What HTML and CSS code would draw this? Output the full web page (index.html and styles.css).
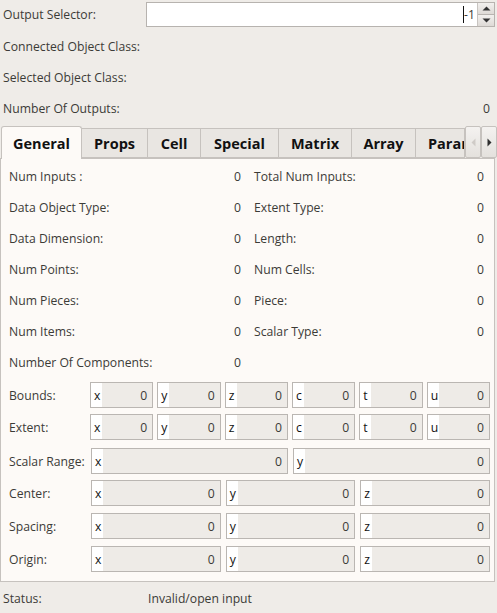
FILE: index.html
```html
<!DOCTYPE html>
<html>
<head>
<meta charset="utf-8">
<link rel="stylesheet" href="styles.css">
</head>
<body>
<div class="top">
  <div class="row first">
    <span class="lbl">Output Selector:</span>
    <div class="spin">
      <div class="spin-field"><span class="caret"></span><span class="num">-1</span></div>
      <div class="spin-btns">
        <div class="sb up"><svg width="9" height="5" viewBox="0 0 9 5"><path d="M0.5 4.5 L4.5 0.5 L8.5 4.5Z" fill="#333"/></svg></div>
        <div class="sb down"><svg width="9" height="5" viewBox="0 0 9 5"><path d="M0.5 0.5 L4.5 4.5 L8.5 0.5Z" fill="#333"/></svg></div>
      </div>
    </div>
  </div>
  <div class="row"><span class="lbl">Connected Object Class:</span></div>
  <div class="row"><span class="lbl">Selected Object Class:</span></div>
  <div class="row"><span class="lbl">Number Of Outputs:</span><span class="num right">0</span></div>
</div>

<div class="tabs">
  <div class="tabbar">
    <div class="tab sel t-general">General</div>
    <div class="tab t-props">Props</div>
    <div class="tab t-cell">Cell</div>
    <div class="tab t-special">Special</div>
    <div class="tab t-matrix">Matrix</div>
    <div class="tab t-array">Array</div>
    <div class="tab clip"><span>Param</span></div>
    <div class="arrow dis"><svg width="5" height="9" viewBox="0 0 5 9"><path d="M4.5 0.5 L0.5 4.5 L4.5 8.5Z" fill="#cfcbc7"/></svg></div>
    <div class="arrow"><svg width="5" height="9" viewBox="0 0 5 9"><path d="M0.5 0.5 L4.5 4.5 L0.5 8.5Z" fill="#2e2e2e"/></svg></div>
  </div>
  <div class="panel">
    <div class="grid">
      <span class="lbl">Num Inputs :</span><span class="num">0</span>
      <span class="lbl">Total Num Inputs:</span><span class="num">0</span>
      <span class="lbl">Data Object Type:</span><span class="num">0</span>
      <span class="lbl">Extent Type:</span><span class="num">0</span>
      <span class="lbl">Data Dimension:</span><span class="num">0</span>
      <span class="lbl">Length:</span><span class="num">0</span>
      <span class="lbl">Num Points:</span><span class="num">0</span>
      <span class="lbl">Num Cells:</span><span class="num">0</span>
      <span class="lbl">Num Pieces:</span><span class="num">0</span>
      <span class="lbl">Piece:</span><span class="num">0</span>
      <span class="lbl">Num Items:</span><span class="num">0</span>
      <span class="lbl">Scalar Type:</span><span class="num">0</span>
      <span class="lbl">Number Of Components:</span><span class="num">0</span>
    </div>
    <div class="vrow r6 first">
      <span class="lbl">Bounds:</span>
      <div class="box"><span class="k">x</span><span class="num">0</span></div>
      <div class="box"><span class="k">y</span><span class="num">0</span></div>
      <div class="box"><span class="k">z</span><span class="num">0</span></div>
      <div class="box"><span class="k">c</span><span class="num">0</span></div>
      <div class="box"><span class="k">t</span><span class="num">0</span></div>
      <div class="box"><span class="k">u</span><span class="num">0</span></div>
    </div>
    <div class="vrow r6">
      <span class="lbl">Extent:</span>
      <div class="box"><span class="k">x</span><span class="num">0</span></div>
      <div class="box"><span class="k">y</span><span class="num">0</span></div>
      <div class="box"><span class="k">z</span><span class="num">0</span></div>
      <div class="box"><span class="k">c</span><span class="num">0</span></div>
      <div class="box"><span class="k">t</span><span class="num">0</span></div>
      <div class="box"><span class="k">u</span><span class="num">0</span></div>
    </div>
    <div class="vrow r2">
      <span class="lbl">Scalar Range:</span>
      <div class="box"><span class="k">x</span><span class="num">0</span></div>
      <div class="box"><span class="k">y</span><span class="num">0</span></div>
    </div>
    <div class="vrow r3 gap6">
      <span class="lbl">Center:</span>
      <div class="box"><span class="k">x</span><span class="num">0</span></div>
      <div class="box"><span class="k">y</span><span class="num">0</span></div>
      <div class="box"><span class="k">z</span><span class="num">0</span></div>
    </div>
    <div class="vrow r3">
      <span class="lbl">Spacing:</span>
      <div class="box"><span class="k">x</span><span class="num">0</span></div>
      <div class="box"><span class="k">y</span><span class="num">0</span></div>
      <div class="box"><span class="k">z</span><span class="num">0</span></div>
    </div>
    <div class="vrow r3">
      <span class="lbl">Origin:</span>
      <div class="box"><span class="k">x</span><span class="num">0</span></div>
      <div class="box"><span class="k">y</span><span class="num">0</span></div>
      <div class="box"><span class="k">z</span><span class="num">0</span></div>
    </div>
  </div>
</div>

<div class="status">
  <span class="lbl">Status:</span>
  <span class="stat">Invalid/open input</span>
</div>
</body>
</html>
```

FILE: styles.css
```css
* { box-sizing: border-box; }
html, body { margin: 0; padding: 0; }
body {
  width: 497px;
  height: 613px;
  background: #efece8;
  font-family: "Open Sans", "Noto Sans", sans-serif;
  font-size: 12.2px;
  color: #3c3b37;
  overflow: hidden;
}
.num { color: #3c3b37; }

.top { padding: 1px 2px 0 3px; }
.row {
  display: flex;
  align-items: center;
  height: 31px;
}
.row.first { height: 26px; margin-bottom: 4px; }
.top .row .lbl { width: 143px; flex: none; }
.row .right { margin-left: auto; margin-right: 5px; }

.spin {
  flex: 1;
  display: flex;
  height: 25px;
  border: 1px solid #b7b3af;
  background: #fff;
}
.spin-field {
  flex: 1;
  display: flex;
  align-items: center;
  justify-content: flex-end;
  padding-right: 2px;
}
.caret { width: 1px; height: 17px; background: #111; }
.spin-btns {
  width: 17px;
  display: flex;
  flex-direction: column;
  border-left: 1px solid #c8c4c0;
}
.sb {
  flex: 1;
  display: flex;
  align-items: center;
  justify-content: center;
  background: linear-gradient(#f2f0ee, #dedad6);
  border-bottom: 1px solid #b8b4b0;
}
.sb.down { border-bottom: none; }

.tabs { margin-top: 2px; }
.tabbar {
  display: flex;
  align-items: flex-end;
  height: 32px;
  padding-left: 1px;
  position: relative;
  z-index: 1;
}
.tab {
  height: 30px;
  display: flex;
  align-items: center;
  justify-content: center;
  font-weight: bold;
  font-size: 14.5px;
  color: #111;
  background: #e9e6e2;
  border: 1px solid #c6c2be;
  border-left: none;
  white-space: nowrap;
}
.tab.sel {
  height: 33px;
  margin-bottom: -1px;
  background: #fdfaf7;
  border: 1px solid #c6c2be;
  border-bottom: none;
  border-radius: 3px 3px 0 0;
}
.t-general { width: 81px; }
.t-props { width: 66px; }
.t-cell { width: 53px; }
.t-special { width: 78px; }
.t-matrix { width: 73px; }
.t-array { width: 64px; }
.tab.clip {
  width: 49px;
  overflow: hidden;
  padding: 0 0 0 12px;
  justify-content: flex-start;
}
.arrow {
  width: 16px;
  height: 32px;
  display: flex;
  align-items: center;
  justify-content: center;
  background: linear-gradient(#f4f2f0, #e4e1dd);
  border: 1px solid #c6c2be;
  border-radius: 2px;
}

.panel {
  width: 495px;
  height: 424px;
  background: #fdfaf7;
  border: 1px solid #c6c2be;
  padding: 2px 4px 0 7px;
}
.grid {
  display: grid;
  grid-template-columns: 222px 11px 232px 11px;
  grid-auto-rows: 31px;
  align-items: center;
}
.grid .lbl { padding-left: 1px; }
.grid .lbl:nth-child(4n+3) { padding-left: 13px; }
.grid .num { text-align: right; }

.vrow {
  display: grid;
  height: 26px;
  margin-top: 6px;
  column-gap: 4px;
  align-items: stretch;
}
.vrow.first { margin-top: 4px; }
.r6 { grid-template-columns: 78px repeat(6, 1fr); }
.r2 { grid-template-columns: 78px repeat(2, 1fr); column-gap: 5px; margin-top: 8px; }
.r3 { grid-template-columns: 78px repeat(3, 1fr); column-gap: 5px; margin-top: 7px; }
.r3.gap6 { margin-top: 6px; }
.vrow .lbl { display: flex; align-items: center; padding-left: 1px; }
.box {
  display: flex;
  align-items: center;
  border: 1px solid #bab6b2;
  background: #eeebe7;
}
.box .k {
  width: 11px;
  align-self: stretch;
  display: flex;
  align-items: center;
  padding-left: 3px;
  background: #fff;
  color: #111;
}
.box .num { margin-left: auto; margin-right: 5px; }

.status {
  display: flex;
  align-items: center;
  height: 33px;
  padding-left: 3px;
}
.status .lbl { width: 145px; }
```
